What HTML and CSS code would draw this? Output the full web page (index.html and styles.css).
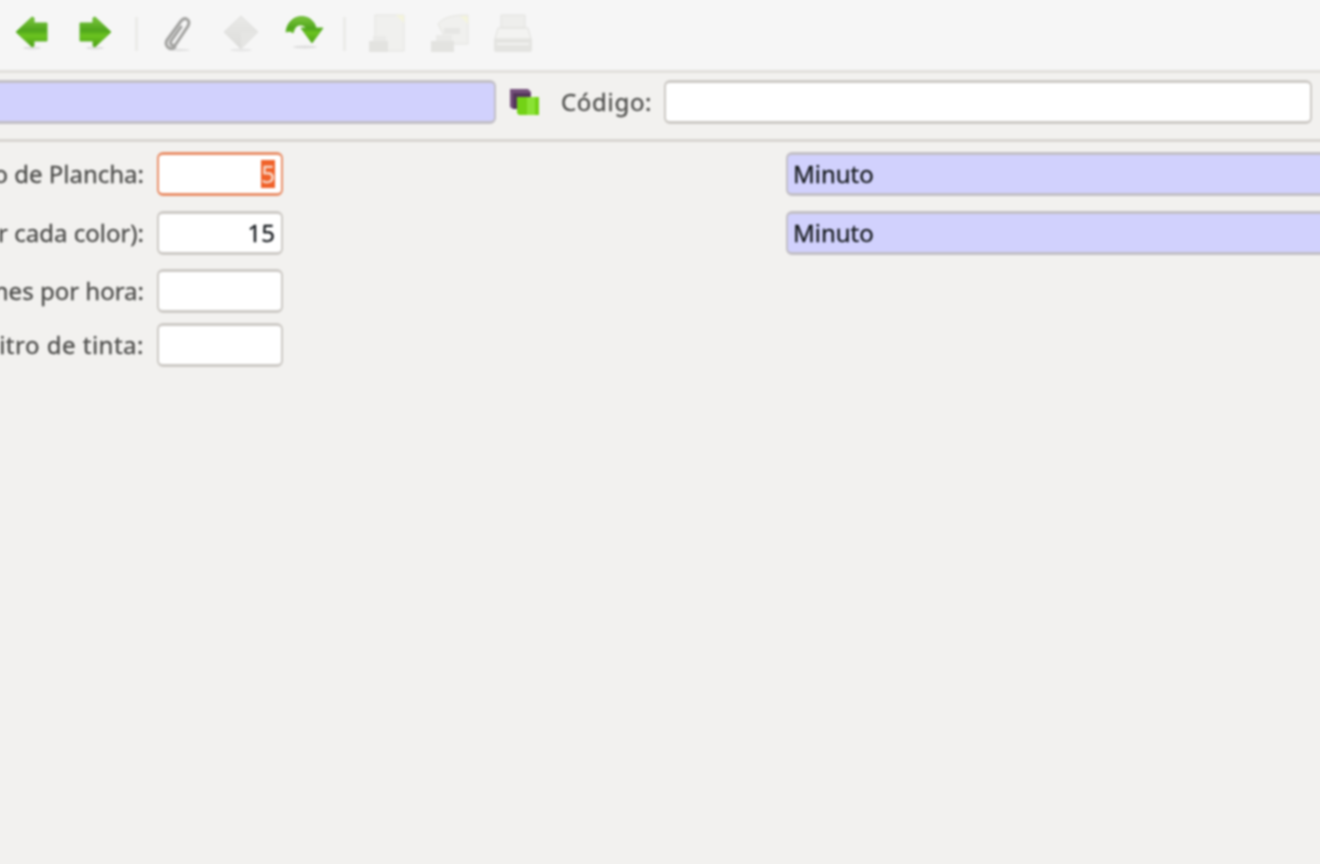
FILE: index.html
```html
<!DOCTYPE html>
<html lang="es">
<head>
<meta charset="utf-8">
<title>Formulario</title>
<link rel="stylesheet" href="styles.css">
</head>
<body>
<div class="app">
  <svg class="defs" width="0" height="0">
    <defs>
      <linearGradient id="g" x1="0" y1="0" x2="0" y2="1"><stop offset="0" stop-color="#7cc53c"/><stop offset=".45" stop-color="#4fa51c"/><stop offset=".62" stop-color="#6cc420"/><stop offset="1" stop-color="#4a9e14"/></linearGradient>
      <linearGradient id="gr" x1="0" y1="0" x2="0" y2="1"><stop offset="0" stop-color="#e9e9e7"/><stop offset="1" stop-color="#dcdcda"/></linearGradient>
    </defs>
  </svg>
  <div class="toolbar">
    <div class="tool">
      <svg width="40" height="40" viewBox="0 0 40 40"><ellipse cx="20" cy="34" rx="9" ry="1.5" fill="#dedede"/><path d="M4 18 L20 3 L22 4 V9 H35 V27 H22 V32 L20 33 Z" fill="url(#g)" stroke="#5fb52a" stroke-linejoin="round"/></svg>
    </div>
    <div class="tool">
      <svg width="40" height="40" viewBox="0 0 40 40"><ellipse cx="20" cy="34" rx="9" ry="1.5" fill="#dedede"/><path d="M36 18 L20 3 L18 4 V9 H5 V27 H18 V32 L20 33 Z" fill="url(#g)" stroke="#5fb52a" stroke-linejoin="round"/></svg>
    </div>
    <div class="sep"></div>
    <div class="tool">
      <svg width="40" height="40" viewBox="0 0 40 40"><ellipse cx="21" cy="36" rx="11" ry="1.2" fill="#e0e0e0"/><path d="M23 13 L13 27 C11 31 16 33 18 30 L30 12 C33 6 27 2 23 7 L9 26 C6 32 12 37 17 33" fill="none" stroke="#a2a2a0" stroke-width="3" stroke-linecap="round"/></svg>
    </div>
    <div class="tool">
      <svg width="40" height="40" viewBox="0 0 40 40"><ellipse cx="20" cy="36" rx="11" ry="1.5" fill="#e6e6e6"/><path d="M20 2 L37 18 L20 35 L3 18 Z" fill="url(#gr)" stroke="#e0e0de"/><path d="M20 18 L37 18 L20 35 Z" fill="#e5e5e3"/></svg>
    </div>
    <div class="tool">
      <svg width="40" height="40" viewBox="0 0 40 40"><ellipse cx="20" cy="33" rx="12" ry="1.5" fill="#dedede"/><path d="M1 18 C2 7 11 1 20 3 C26 4 30 9 31 14 H38 L27 29 L16 14 H21 C19 11 15 10 12 12 C10 13 9 16 8 19 C6 17 4 17 1 18 Z" fill="url(#g)" stroke="#5fb52a" stroke-linejoin="round"/></svg>
    </div>
    <div class="sep sep-second"></div>
    <div class="tool">
      <svg width="40" height="40" viewBox="0 0 40 40"><path d="M9 1 H38 V37 H9 Z" fill="#f0f0ee" stroke="#e4e4e0"/><path d="M30 1 H38 V9Z" fill="#f4f4dc"/><path d="M3 27 H22 V38 H3 Z" fill="#e3e3e0"/><path d="M7 22 H20 V27 H7 Z" fill="#eaeae8"/></svg>
    </div>
    <div class="tool">
      <svg width="40" height="40" viewBox="0 0 40 40"><path d="M8 10 C14 2 26 1 38 1 V30 H18 Z" fill="#f0f0ee" stroke="#e4e4e0"/><path d="M30 2 H38 V10Z" fill="#f4f4dc"/><path d="M1 27 H24 V38 H1 Z" fill="#e3e3e0"/><path d="M6 21 H22 V27 H6 Z" fill="#eaeae8"/><path d="M14 14 H30 V20 H14 Z" fill="#e6e6e4"/></svg>
    </div>
    <div class="tool">
      <svg width="40" height="40" viewBox="0 0 40 40"><path d="M8 1 H32 V14 H8 Z" fill="#eeeeec" stroke="#e2e2df"/><path d="M5 14 H35 L38 25 H2 Z" fill="#f3f3f1" stroke="#e0e0dd"/><path d="M1 25 H39 V36 Q39 38 36 38 H4 Q1 38 1 36 Z" fill="#e4e4e1"/><path d="M4 30 H36" stroke="#f2f2f0" stroke-width="2"/></svg>
    </div>
  </div>
  <div class="headbar">
    <div class="field field-req field-name"></div>
    <svg class="folder" width="30" height="28" viewBox="0 0 30 28"><path d="M0 1 H18 L21 4 V21 H3 L0 19 Z" fill="#75507b"/><path d="M3 5 H20 V21 H3 Z" fill="#53365a"/><path d="M7 9 H29 V27 H9 L7 25 Z" fill="#73d216"/><path d="M17 9 H25 V27 H17Z" fill="#8ae234"/></svg>
    <span class="label code-label">Código:</span>
    <div class="field field-code"></div>
  </div>
  <div class="form">
    <div class="col-left">
      <div class="row row-a">
        <span class="label">o de Plancha:</span>
        <div class="field field-num field-focus"><span class="sel">5</span></div>
      </div>
      <div class="row row-b">
        <span class="label">r cada color):</span>
        <div class="field field-num">15</div>
      </div>
      <div class="row row-c">
        <span class="label">nes por hora:</span>
        <div class="field field-num"></div>
      </div>
      <div class="row row-d">
        <span class="label label-wide">itro de tinta:</span>
        <div class="field field-num"></div>
      </div>
    </div>
    <div class="col-right">
      <div class="field field-req field-unit">Minuto</div>
      <div class="field field-req field-unit">Minuto</div>
    </div>
  </div>
</div>
</body>
</html>
```
FILE: styles.css
```css
* { box-sizing: border-box; }
html, body { margin: 0; padding: 0; height: 100%; overflow: hidden; background: #f2f1ef; }
.app {
  width: 1340px;
  height: 884px;
  margin: -10px;
  padding: 10px;
  overflow: hidden;
  background: #f2f1ef;
  font-family: "Noto Sans", "Open Sans", sans-serif;
  font-size: 24px;
  color: #4c4c4a;
  -webkit-text-stroke: 0.3px currentColor;
  filter: blur(0.9px);
}
.defs { display: block; height: 0; }
.toolbar {
  height: 80px;
  margin: -10px -10px 0;
  background: #f6f6f6;
  display: flex;
  align-items: center;
  padding: 10px 0 3px 10px;
}
.tool { width: 63.5px; flex: none; display: flex; justify-content: center; align-items: center; }
.sep { width: 19px; flex: none; height: 34px; position: relative; }
.sep::after { content: ""; position: absolute; left: 8px; top: 0; bottom: 0; width: 3px; background: #ebebe9; }
.sep-second { width: 18px; }
.sep-second::after { left: 6px; }
.headbar {
  height: 72px;
  margin: 0 -10px;
  display: flex;
  align-items: center;
  border-top: 3px solid #e2e0dc;
  border-bottom: 3px solid #d8d5d1;
  padding: 0 0 9px 10px;
}
.field {
  height: 44px;
  background: #fff;
  border-style: solid;
  border-width: 3px 2px;
  border-color: #cdcac6;
  border-radius: 6px;
  display: flex;
  align-items: center;
  color: #2e3436;
  line-height: 1;
}
.field-req { background: #d1d1fd; border-color: #c2bfc6; }
.field-name { width: 506px; margin-left: -10px; flex: none; }
.folder { margin-left: 14px; flex: none; }
.label { white-space: nowrap; line-height: 1; }
.label-wide { letter-spacing: 0.5px; }
.code-label { margin-left: 21px; width: 90px; flex: none; letter-spacing: 0.7px; }
.field-code { margin-left: 13px; width: 648px; flex: none; }
.form { display: flex; padding-top: 10px; }
.col-left { width: 283px; flex: none; display: flex; flex-direction: column; }
.col-right { margin-left: 503px; width: 560px; flex: none; display: flex; flex-direction: column; gap: 15px; }
.row { display: flex; justify-content: flex-end; align-items: center; gap: 13px; }
.row-b { margin-top: 15px; }
.row-c { margin-top: 14px; }
.row-d { margin-top: 10px; }
.field-num { width: 126px; flex: none; justify-content: flex-end; padding-right: 6px; color: #14181c; }
.field-focus { border-color: #e9906a; }
.sel { background: #f0622a; color: #f8d8c8; padding: 2px 0; }
.field-unit { padding-left: 5px; color: #14181c; }
```
